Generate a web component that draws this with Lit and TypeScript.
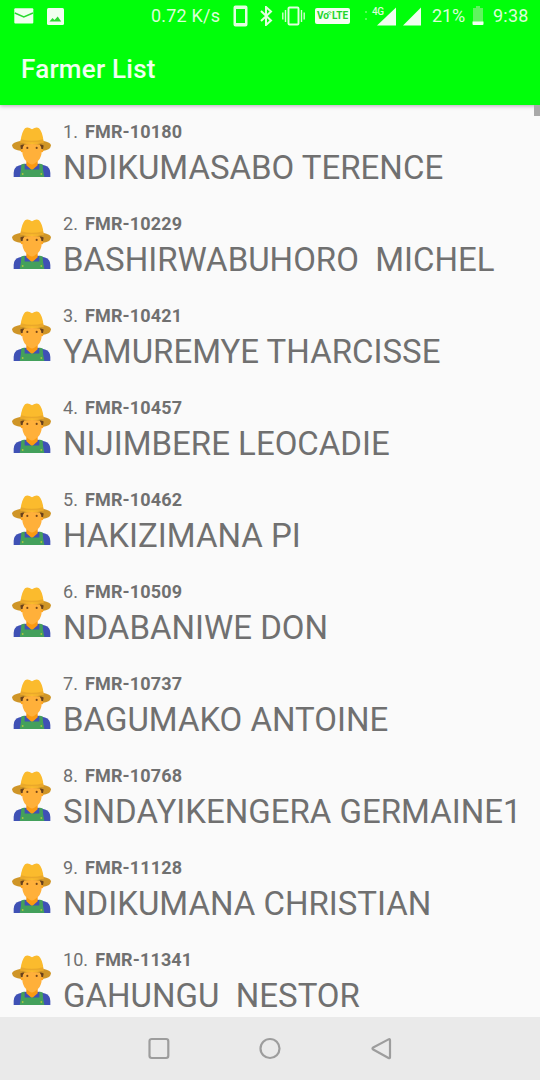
import { LitElement, html, css, svg } from "lit";
import { customElement, property } from "lit/decorators.js";

interface Farmer {
  code: string;
  name: string;
}

const FARMERS: Farmer[] = [
  { code: "FMR-10180", name: "NDIKUMASABO TERENCE" },
  { code: "FMR-10229", name: "BASHIRWABUHORO  MICHEL" },
  { code: "FMR-10421", name: "YAMUREMYE THARCISSE" },
  { code: "FMR-10457", name: "NIJIMBERE LEOCADIE" },
  { code: "FMR-10462", name: "HAKIZIMANA PI" },
  { code: "FMR-10509", name: "NDABANIWE DON" },
  { code: "FMR-10737", name: "BAGUMAKO ANTOINE" },
  { code: "FMR-10768", name: "SINDAYIKENGERA GERMAINE1" },
  { code: "FMR-11128", name: "NDIKUMANA CHRISTIAN" },
  { code: "FMR-11341", name: "GAHUNGU  NESTOR" },
];

@customElement("status-bar")
class StatusBar extends LitElement {
  static styles = css`
    :host {
      display: flex;
      align-items: center;
      height: 32px;
      padding: 0 10px 0 14px;
      box-sizing: border-box;
      color: #dcffd9;
      font: 18px/32px Roboto, sans-serif;
      white-space: nowrap;
    }
    svg { display: block; flex: none; }
    .photo { margin-left: 13px; }
    .speed { margin-left: 87px; width: 70px; letter-spacing: 0.2px; }
    .phone { margin-left: 12px; }
    .bluetooth { margin-left: 12px; }
    .vibrate { margin-left: 9px; }
    .volte {
      display: flex;
      align-items: center;
      justify-content: center;
      flex: none;
      margin-left: 10px;
      width: 35px;
      height: 16px;
      border-radius: 2px;
      background: #f4fff2;
      color: #22d52b;
      font: 700 10px/16px Roboto, sans-serif;
    }
    .volte svg { margin: -7px 0 0 -2px; }
    .signal { margin-left: 14px; }
    .second { margin-left: 6px; }
    .percent { margin-left: 10px; width: 34px; letter-spacing: -0.1px; }
    .battery { margin-left: 6px; }
    .clock { margin-left: 9px; letter-spacing: 0.2px; }
  `;
  render() {
    return html`
      <svg width="20" height="16" viewBox="0 0 20 16">
        <rect x=".3" y=".3" width="19" height="15.2" rx="1" fill="#f1fff0" />
        <path d="M.8 5 9.8 9 19 5" fill="none" stroke="#29d930" stroke-width="1.4" />
      </svg>
      <svg class="photo" width="17" height="17" viewBox="0 0 17 17">
        <rect width="17" height="17" rx="1.5" fill="#f1fff0" />
        <path d="m2.500 13.500 3-3.500 2 2 3.200-3.500 3.500 5z" fill="#29d930" />
      </svg>
      <span class="speed">0.72 K/s</span>
      <svg class="phone" width="15" height="22" viewBox="0 0 15 22">
        <path d="M2.500.5h10A2 2 0 0 1 14.500 2.500v17a2 2 0 0 1-2 2h-10A2 2 0 0 1 .5 19.500v-17A2 2 0 0 1 2.500.5ZM3 4v14h9V4Z" fill="#e2ffe0" fill-rule="evenodd" />
      </svg>
      <svg class="bluetooth" width="13" height="20" viewBox="0 0 13 20">
        <path d="m1 5 10 9.500-5 4.500V1l5 4.500L1 15" fill="none" stroke="#e2ffe0" stroke-width="2" />
      </svg>
      <svg class="vibrate" width="23" height="20" viewBox="0 0 23 20">
        <rect x="6.500" y="1.500" width="10" height="17" rx="1" fill="none" stroke="#e2ffe0" stroke-width="1.900" />
        <path d="M3.500 4v12M.8 6.500v7M19.500 4v12M22.200 6.500v7" stroke="#d2ffcf" stroke-width="1.400" />
      </svg>
      <span class="volte">Vo<svg width="5" height="4" viewBox="0 0 5 4"><path d="M.5 1.500Q2.500 0 4.500 1.500M1.500 3.200q1-.8 2 0" fill="none" stroke="#22d52b" stroke-width=".9" /></svg>LTE</span>
      <svg class="signal" width="33" height="20" viewBox="0 0 33 20">
        <path d="M2 5v2M2 12v2" stroke="#75ff73" stroke-width="1.400" />
        <text x="8" y="9" font-family="Roboto, sans-serif" font-size="10" font-weight="500" fill="#dcffd9" textLength="12">4G</text>
        <path d="M32 1.500v18H13Z" fill="#f1fff0" />
      </svg>
      <svg class="second" width="19" height="20" viewBox="0 0 19 20">
        <path d="M18 1.500v18H0Z" fill="#f1fff0" />
      </svg>
      <span class="percent">21%</span>
      <svg class="battery" width="12" height="20" viewBox="0 0 12 20">
        <path d="M1 2h3V0h4v2h3v14H1Z" fill="#60f45e" />
        <path d="M.5 15.500h11V18a1 1 0 0 1-1 1h-9a1 1 0 0 1-1-1Z" fill="#f5fff4" />
      </svg>
      <span class="clock">9:38</span>
    `;
  }
}

const farmerArt = svg`
  <path d="M24 175v-12q0-17 16-22l20-5h38l20 5q16 5 16 22v12Z" fill="#3f51b5" />
  <path d="M62 122h34v18L79 155 62 140Z" fill="#fb9a12" />
  <path d="M50 76h58v24q0 15-10 26l-12 10q-7 4-14 0l-12-10q-10-11-10-26Z" fill="#ffb03a" />
  <path d="M19 82q1-9 27-14h66q24 5 24 14-2 14-26 16 0-9-4-17-27-7-54 0-4 8-4 17Q21 96 19 82Z" fill="#cf9527" />
  <path d="M44 82q6-4 12-3-5 6-5 14h-5Zm70 0q-6-4-12-3 5 6 5 14h5Z" fill="#69411b" />
  <ellipse cx="49" cy="97" rx="4" ry="5" fill="#ffa726" />
  <ellipse cx="109" cy="97" rx="4" ry="5" fill="#ffa726" />
  <circle cx="65" cy="89" r="3.200" fill="#784719" />
  <circle cx="93" cy="89" r="3.200" fill="#784719" />
  <path d="M44 72q4-31 14-41 8-6 21 3 13-9 21-3 11 10 14 41-35 11-70 0Z" fill="#fbbb2d" />
  <path d="M46 63q33 9 66 0l2 12q-35-6-70 0Z" fill="#eaa82a" />
  <path d="M47 138l10-3v18h44v-18l10 3q0 17 5 37H42q5-20 5-37Z" fill="#43a05b" />
  <circle cx="51" cy="166" r="2.800" fill="#a9c641" />
  <circle cx="107" cy="166" r="2.800" fill="#a9c641" />
`;

@customElement("farmer-row")
class FarmerRow extends LitElement {
  @property({ type: Number }) index = 0;
  @property() code = "";
  @property() name = "";
  static styles = css`
    :host {
      display: flex;
      height: 92px;
      flex: none;
      color: #707070;
      font-family: Roboto, sans-serif;
      white-space: pre;
    }
    .avatar { flex: none; margin: 22px 12px 0 12px; }
    .ident { height: 22px; margin-top: 16px; font-size: 18px; line-height: 22px; letter-spacing: 0.05px; }
    .ident b { font-weight: 700; margin-left: 7px; letter-spacing: 0.14px; }
    .name { height: 44px; margin-top: 3px; font-size: 33px; line-height: 44px; }
  `;
  render() {
    return html`
      <svg class="avatar" width="39" height="50" viewBox="19 27 117 148" preserveAspectRatio="none">${farmerArt}</svg>
      <div><div class="ident">${this.index}.<b>${this.code}</b></div><div class="name">${this.name}</div></div>
    `;
  }
}

@customElement("nav-bar")
class NavBar extends LitElement {
  static styles = css`
    :host {
      display: flex;
      flex: none;
      align-items: center;
      justify-content: center;
      gap: 87px;
      height: 63px;
      background: #eaeaea;
    }
    svg { display: block; fill: none; stroke: #9d9d9d; stroke-width: 2.2; stroke-linejoin: round; }
  `;
  render() {
    return html`
      <svg width="24" height="24" viewBox="0 0 24 24"><rect x="2.500" y="2" width="18.800" height="19" rx="2.200" /></svg>
      <svg width="24" height="24" viewBox="0 0 24 24"><circle cx="12" cy="11.500" r="9.500" /></svg>
      <svg width="24" height="24" viewBox="0 0 24 24"><path d="M21 3.200v17q0 1.500-1.500.8L4.200 12.500q-1.500-1 0-2L19.500 2.400q1.500-.7 1.500.8Z" /></svg>
    `;
  }
}

@customElement("app-root")
class AppRoot extends LitElement {
  static styles = css`
    :host {
      display: flex;
      flex-direction: column;
      position: relative;
      width: 540px;
      height: 1080px;
      overflow: hidden;
      background: #fafafa;
      font-family: Roboto, sans-serif;
    }
    .header {
      flex: none;
      height: 105px;
      background: #00ff0a;
      box-shadow: 0 1px 4px rgba(70, 0, 70, 0.35);
      z-index: 1;
    }
    .title {
      margin: 0;
      padding: 21px 0 0 21px;
      color: #f1fff0;
      font-size: 26px;
      font-weight: 500;
      line-height: 32px;
      letter-spacing: 0.25px;
    }
    .list {
      display: flex;
      flex-direction: column;
      flex: 1;
      min-height: 0;
      overflow: hidden;
    }
    .thumb {
      position: absolute;
      top: 105px;
      right: 0;
      z-index: 2;
      width: 6px;
      height: 11px;
      background: #a9a9a9;
    }
  `;
  render() {
    return html`
      <header class="header">
        <status-bar></status-bar>
        <h1 class="title">Farmer List</h1>
      </header>
      <main class="list">
        ${FARMERS.map((f, i) => html`<farmer-row .index=${i + 1} .code=${f.code} .name=${f.name}></farmer-row>`)}
      </main>
      <div class="thumb"></div>
      <nav-bar></nav-bar>
    `;
  }
}
